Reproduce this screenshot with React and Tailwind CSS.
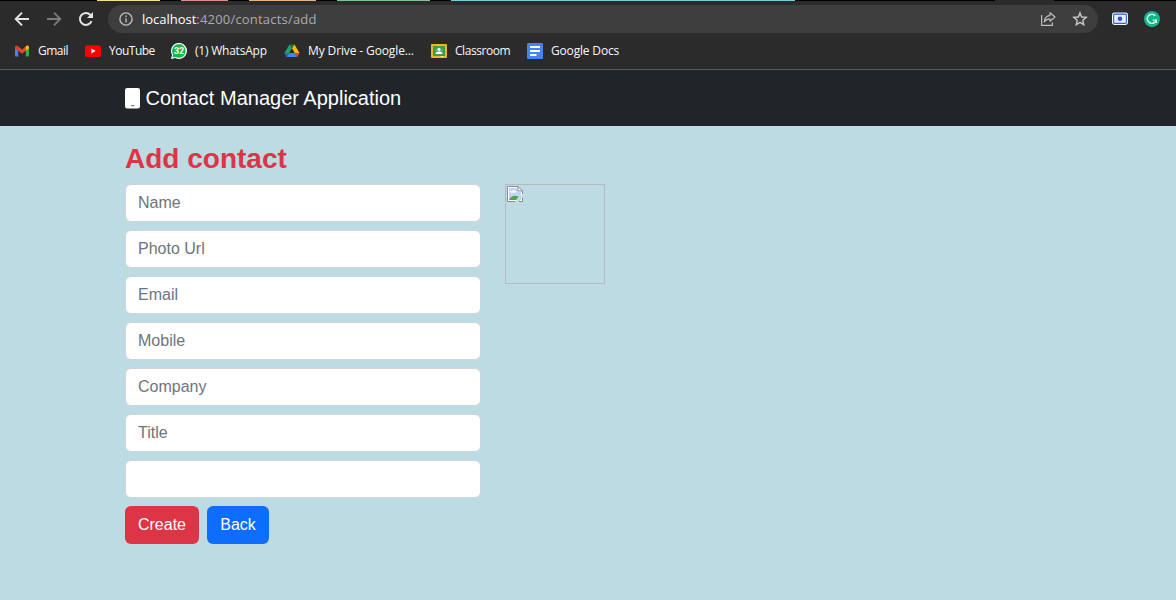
import React from "react";

function GmailIcon() {
  return (
    <svg width="16" height="16" viewBox="0 0 16 16">
      <path d="M1 3.600v9.200c0 .4.300.7.700.7H4.200V6.600z" fill="#4285f4" />
      <path d="M15 3.600v9.200c0 .4-.300.7-.700.7h-2.500V6.600z" fill="#34a853" />
      <path d="M4 3.200l4 3.200 4-3.200v4.400L8 10.800 4 7.600z" fill="#ea4335" />
      <path d="M1 4.200c0-1.700 1.800-2.300 2.900-1.200l.3.300v4.500L1 5.500z" fill="#d93a30" />
      <path d="M15 4.200c0-1.700-1.800-2.300-2.900-1.200l-.3.300v4.500L15 5.500z" fill="#fbbc04" />
    </svg>
  );
}

function YouTubeIcon() {
  return (
    <svg width="16" height="16" viewBox="0 0 16 16">
      <rect x="0" y="2.2" width="16" height="11.8" rx="2.600" fill="#ff0000" />
      <path d="M6.300 5.600v4.900L10.600 8z" fill="#fff" />
    </svg>
  );
}

function WhatsAppIcon() {
  return (
    <svg width="16" height="16" viewBox="0 0 16 16">
      <path d="M0 16l1-4.200A8 8 0 1 1 4.300 15z" fill="#fff" />
      <path d="M1.400 14.600l.8-2.900A6.800 6.800 0 1 1 4.600 13.900z" fill="#12b94b" />
      <text x="8.1" y="11.100" fontSize="8.800" fontWeight="700" textAnchor="middle" fill="#fff" fontFamily="Roboto, sans-serif">32</text>
    </svg>
  );
}

function DriveIcon() {
  return (
    <svg width="16" height="16" viewBox="0 0 16 16">
      <path d="M5.400 1.600L.6 10l2.200 4 5.200-9z" fill="#1fa463" />
      <path d="M5.400 1.600h5.100L8 5.200z" fill="#12793d" />
      <path d="M10.500 1.600L8 5.200l2.800 4.800h4.700z" fill="#fbbc04" />
      <path d="M5.100 10L2.800 14h10.400l-2.400-4z" fill="#4285f4" />
      <path d="M10.800 10h4.700l-2.300 4z" fill="#ea4335" />
      <path d="M.6 10h4.500l-2.300 4z" fill="#2666cf" />
    </svg>
  );
}

function ClassroomIcon() {
  return (
    <svg width="16" height="16" viewBox="0 0 16 16">
      <rect y="1" width="16" height="14" rx="1" fill="#f0b41c" />
      <rect x="2" y="3" width="12" height="10" fill="#3f9b4c" />
      <circle cx="8" cy="6.300" r="1.600" fill="#fff" />
      <circle cx="5" cy="7.500" r=".8" fill="#7cbd86" />
      <circle cx="11" cy="7.500" r=".8" fill="#7cbd86" />
      <path d="M4.600 11v-.8c0-2.200 6.800-2.200 6.800 0v.8z" fill="#fff" />
      <path d="M9.500 13h3v1h-3z" fill="#f7e3ac" />
    </svg>
  );
}

function DocsIcon() {
  return (
    <svg width="16" height="16" viewBox="0 0 16 16">
      <rect width="16" height="16" rx="1.200" fill="#4285f4" />
      <path d="M3 3h10v2H3zM3 7h10v2H3zM3 11h6.500v2H3z" fill="#fff" />
    </svg>
  );
}

const bookmarks = [
  { label: "Gmail", Icon: GmailIcon, item: "w-[71px]", text: "tracking-[-0.5px]" },
  { label: "YouTube", Icon: YouTubeIcon, item: "w-[86px]", text: "tracking-[-0.5px]" },
  { label: "(1) WhatsApp", Icon: WhatsAppIcon, item: "w-[113px]", text: "tracking-[-0.22px]" },
  { label: "My Drive - Google...", Icon: DriveIcon, item: "w-[147px]", text: "tracking-[-0.12px]" },
  { label: "Classroom", Icon: ClassroomIcon, item: "w-[96px]", text: "tracking-[-0.45px]" },
  { label: "Google Docs", Icon: DocsIcon, item: "w-[110px]", text: "tracking-[-0.17px]" },
];

function TabStrip() {
  return (
    <div className="flex h-px bg-black">
      <div className="ml-[97px] w-[63px] bg-[#f5e08a]" />
      <div className="ml-[21px] w-[47px] bg-[#d98f8a]" />
      <div className="ml-[21px] w-[67px] bg-[#e8b484]" />
      <div className="ml-[21px] w-[93px] bg-[#7fc495]" />
      <div className="ml-[21px] w-[344px] bg-[#7cccd8]" />
      <div className="ml-[200px] w-[59px] bg-[#2b2b2b]" />
    </div>
  );
}

function AddressRow() {
  return (
    <div className="flex h-[36px] items-center pl-[14px]">
      <svg width="16" height="16" viewBox="0 0 16 16" fill="none" stroke="#e4e4e4" strokeWidth="1.900">
        <path d="M15 8H2M8 1.700L1.700 8 8 14.300" />
      </svg>
      <svg className="ml-4" width="16" height="16" viewBox="0 0 16 16" fill="none" stroke="#7c7c7c" strokeWidth="1.800">
        <path d="M1 8h13M8 1.700L14.300 8 8 14.300" />
      </svg>
      <svg className="ml-4" width="16" height="16" viewBox="0 0 16 16" fill="none">
        <path d="M13.500 10.100A6 6 0 1 1 12.400 3.900L14 5.700" stroke="#e4e4e4" strokeWidth="2" />
        <path d="M15 .9v6H9z" fill="#e4e4e4" />
      </svg>
      <div className="ml-[14px] flex h-[28px] w-[990px] items-center rounded-full bg-[#3e3e3e] pl-[11px] pr-[10px]">
        <svg width="14" height="14" viewBox="0 0 14 14" fill="none" stroke="#bcbcbc" strokeWidth="1.400">
          <circle cx="7" cy="7" r="6.100" />
          <path d="M7 6.200v4.200M7 3.500v1.500" />
        </svg>
        <div className="ml-[9px] grow whitespace-nowrap font-['Open_Sans',sans-serif] text-[13px] leading-5 text-[#a9abae]">
          <span className="tracking-[-0.02px] text-white">localhost</span>
          <span className="tracking-[0.2px]">:4200/contacts/add</span>
        </div>
        <svg width="16" height="16" viewBox="0 0 16 16" fill="none" stroke="#bdbdbd" strokeWidth="1.200">
          <path d="M1.600 4v10.400h10.800v-3" />
          <path d="M10 1.800L15 6l-5 4.200V7.800c-2.700 0-4.300.8-5.800 3C4.600 7 6.600 4.800 10 4.300z" strokeLinejoin="round" />
        </svg>
        <svg className="ml-4" width="16" height="16" viewBox="0 0 16 16" fill="none" stroke="#c8c8c8" strokeWidth="1.400">
          <path d="M8 1.900l1.700 4.100 4.500.4-3.400 2.900 1 4.400L8 11.400l-3.800 2.300 1-4.400L1.800 6.400l4.500-.4z" />
        </svg>
      </div>
      <svg className="ml-[14px]" width="16" height="16" viewBox="0 0 16 16">
        <rect y="1.500" width="16" height="12.500" rx="2.400" fill="#f1f6ff" />
        <rect x="1.600" y="3.100" width="12.800" height="9.300" rx="1.200" fill="#e3efff" stroke="#2b62c9" strokeWidth="1.100" />
        <circle cx="8" cy="7.700" r="2.300" fill="#4248cf" />
      </svg>
      <svg className="ml-4" width="16" height="16" viewBox="0 0 16 16">
        <circle cx="8" cy="8" r="8" fill="#15b58b" />
        <path d="M11.400 4.800A4.600 4.600 0 1 0 12.300 9.100H8.800M12.300 9.100v2.800" fill="none" stroke="#d9fff2" strokeWidth="1.400" />
      </svg>
    </div>
  );
}

function BrowserChrome() {
  return (
    <div className="flex h-[70px] flex-col border-b border-[#5c5d5e] bg-[#2b2b2b]">
      <TabStrip />
      <AddressRow />
      <div className="flex h-[28px] items-center pl-[14px]">
        {bookmarks.map(({ label, Icon, item, text }) => (
          <div key={label} className={`flex shrink-0 items-center gap-2 ${item}`}>
            <Icon />
            <span className={`whitespace-nowrap font-['Open_Sans',sans-serif] text-[12px] leading-4 text-[#f8f8f8] ${text}`}>{label}</span>
          </div>
        ))}
      </div>
    </div>
  );
}

function BrokenImage() {
  return (
    <div className="ml-6 h-[100px] w-[100px] border border-[#b7babd] p-px">
      <svg width="16" height="16" viewBox="0 0 16 16">
        <path d="M.5.500h10.500l4.500 4.500v10.500H.5z" fill="#fff" />
        <path d="M2 2h8.500v4H14v8H2z" fill="#c1d5f8" />
        <path d="M2.500 6.500c0-1.700 1.800-2 2.500-1C6 3.500 9 4 9 6.500z" fill="#fff" />
        <path d="M2 14c2-4 5.500-5 9.500-3.500L9 14z" fill="#52a63b" />
        <path d="M8 16l8-8v3.500L11.500 16z" fill="#bddbe3" />
        <path d="M15.500 8V5L11 .500H.5v15H8M12 15.500h3.500V12M11 .500V5h4.500" fill="none" stroke="#868b91" />
      </svg>
    </div>
  );
}

const fields = ["Name", "Photo Url", "Email", "Mobile", "Company", "Title", ""];

export default function App() {
  return (
    <div className="flex h-[600px] w-[1176px] flex-col overflow-hidden bg-[#bddbe3] font-['Liberation_Sans',Arial,sans-serif]">
      <BrowserChrome />
      <nav className="flex h-[56px] shrink-0 items-center bg-[#212529] pl-[125px]">
        <svg width="15" height="21" viewBox="0 0 15 21">
          <rect width="15" height="20.500" rx="2.200" fill="#fff" />
          <rect x="6" y="17" width="3.500" height="1.300" rx=".6" fill="#777b80" />
        </svg>
        <span className="ml-[5.500px] text-[20px] leading-[30px] text-white">Contact Manager Application</span>
      </nav>
      <main className="pl-[125px] pt-4">
        <h1 className="mb-2 text-[28px] font-bold leading-[34px] text-[#dc3545]">Add contact</h1>
        <div className="flex items-start">
          <form className="flex w-[356px] flex-col gap-2">
            {fields.map((name, i) => (
              <input
                key={i}
                placeholder={name}
                className="h-[38px] w-full rounded-[6px] border border-[#ced4da] bg-white px-3 text-[16px] leading-6 placeholder:text-[#6c757d]"
              />
            ))}
            <div className="flex gap-2">
              <button type="button" className="h-[38px] w-[74px] rounded-[6px] bg-[#dc3545] text-[16px] leading-6 text-white">Create</button>
              <button type="button" className="h-[38px] w-[62px] rounded-[6px] bg-[#0d6efd] text-[16px] leading-6 text-white">Back</button>
            </div>
          </form>
          <BrokenImage />
        </div>
      </main>
    </div>
  );
}
